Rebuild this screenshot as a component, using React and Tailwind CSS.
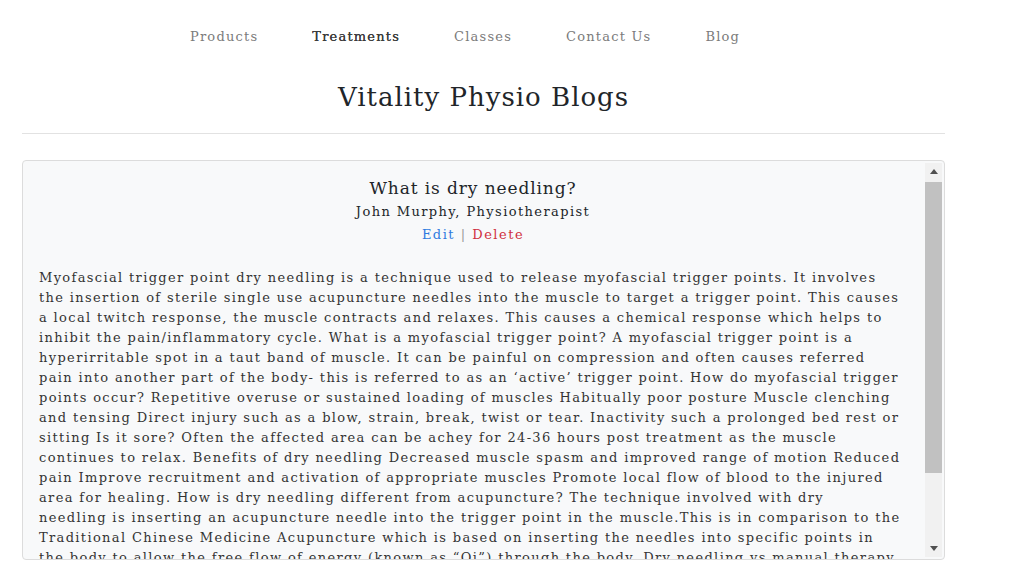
const navItems = ["Products", "Treatments", "Classes", "Contact Us", "Blog"];

// line breaks follow the original rendering
const bodyLines = [
  "Myofascial trigger point dry needling is a technique used to release myofascial trigger points. It involves",
  "the insertion of sterile single use acupuncture needles into the muscle to target a trigger point. This causes",
  "a local twitch response, the muscle contracts and relaxes. This causes a chemical response which helps to",
  "inhibit the pain/inflammatory cycle. What is a myofascial trigger point? A myofascial trigger point is a",
  "hyperirritable spot in a taut band of muscle. It can be painful on compression and often causes referred",
  "pain into another part of the body- this is referred to as an \u2018active\u2019 trigger point. How do myofascial trigger",
  "points occur? Repetitive overuse or sustained loading of muscles Habitually poor posture Muscle clenching",
  "and tensing Direct injury such as a blow, strain, break, twist or tear. Inactivity such a prolonged bed rest or",
  "sitting Is it sore? Often the affected area can be achey for 24-36 hours post treatment as the muscle",
  "continues to relax. Benefits of dry needling Decreased muscle spasm and improved range of motion Reduced",
  "pain Improve recruitment and activation of appropriate muscles Promote local flow of blood to the injured",
  "area for healing. How is dry needling different from acupuncture? The technique involved with dry",
  "needling is inserting an acupuncture needle into the trigger point in the muscle.This is in comparison to the",
  "Traditional Chinese Medicine Acupuncture which is based on inserting the needles into specific points in",
  "the body to allow the free flow of energy (known as \u201cQi\u201d) through the body. Dry needling vs manual therapy",
  "Dry needling is often used alongside manual therapy and exercise as part of a full treatment plan.",
];

function Arrow({ up }) {
  return (
    <div className="flex h-[17px] items-center justify-center">
      <svg width="8" height="5" viewBox="0 0 8 5">
        <path d={up ? "M0 5 L4 0 L8 5 Z" : "M0 0 L4 5 L8 0 Z"} fill="#505050" />
      </svg>
    </div>
  );
}

export default function App() {
  return (
    <div className="min-h-[571px] bg-white font-['DejaVu_Serif',serif] text-[#212529]">
      <nav className="flex pt-[27px] pl-[190px] text-[13px] tracking-[1.2px] text-[#7b7b7b]">
        {navItems.map((item) => (
          <a
            key={item}
            className={`mr-[54px] ${item === "Treatments" ? "text-[#3a3a3a] [text-shadow:0_0_0.4px_#3a3a3a]" : ""}`}
          >
            {item}
          </a>
        ))}
      </nav>

      <div className="ml-[22px] w-[923px]">
        <h1 className="mt-[31px] text-center text-[26px] tracking-[1px] text-[#212529]">
          Vitality Physio Blogs
        </h1>
        <hr className="mt-[16px] border-[#e2e2e2]" />

        <div className="mt-[26px] flex h-[400px] overflow-hidden rounded border border-[#dcdcdc] bg-[#f8f9fa]">
          <div className="flex-1 overflow-hidden pl-[16px] pr-[10px] pt-[15px]">
            <div className="pr-[8px] text-center">
              <h2 className="text-[17px] tracking-[0.9px] text-[#212529]">What is dry needling?</h2>
              <p className="mt-[1px] text-[13px] tracking-[1.4px] text-[#212529]">
                John Murphy, Physiotherapist
              </p>
              <p className="mt-[3px] text-[13px] tracking-[1.5px]">
                <a className="text-[#2f7be0]">Edit</a>
                <span className="text-[#999]"> | </span>
                <a className="text-[#d0303f]">Delete</a>
              </p>
            </div>
            <p className="mt-[24px] whitespace-nowrap text-[13px] leading-[20px] tracking-[1.35px] text-[#333]">
              {bodyLines.map((line, i) => (
                <span key={i} className="block">
                  {line}
                </span>
              ))}
            </p>
          </div>
          <div className="my-[2px] mr-[2px] flex w-[17px] flex-col bg-[#f1f1f1]">
            <Arrow up />
            <div className="mt-[2px] h-[291px] bg-[#c1c1c1]" />
            <div className="flex-1" />
            <Arrow />
          </div>
        </div>
      </div>
    </div>
  );
}
